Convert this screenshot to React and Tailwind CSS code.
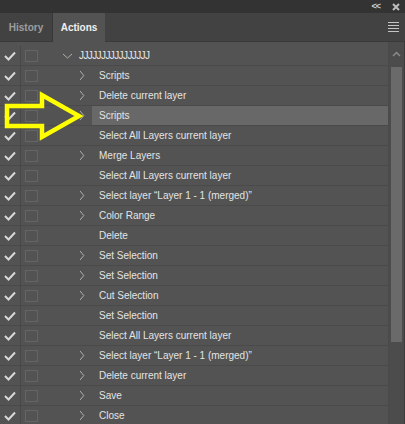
import React from "react";

const rows = [
  { level: 0, chev: "down", text: "JJJJJJJJJJJJJJJJ" },
  { level: 1, chev: "right", text: "Scripts" },
  { level: 1, chev: "right", text: "Delete current layer" },
  { level: 1, chev: "right", text: "Scripts", active: true },
  { level: 1, chev: null, text: "Select All Layers current layer" },
  { level: 1, chev: "right", text: "Merge Layers" },
  { level: 1, chev: null, text: "Select All Layers current layer" },
  { level: 1, chev: "right", text: "Select layer \u201cLayer 1 - 1 (merged)\u201d" },
  { level: 1, chev: "right", text: "Color Range" },
  { level: 1, chev: null, text: "Delete" },
  { level: 1, chev: "right", text: "Set Selection" },
  { level: 1, chev: "right", text: "Set Selection" },
  { level: 1, chev: "right", text: "Cut Selection" },
  { level: 1, chev: null, text: "Set Selection" },
  { level: 1, chev: null, text: "Select All Layers current layer" },
  { level: 1, chev: "right", text: "Select layer \u201cLayer 1 - 1 (merged)\u201d" },
  { level: 1, chev: "right", text: "Delete current layer" },
  { level: 1, chev: "right", text: "Save" },
  { level: 1, chev: "right", text: "Close" },
];

function Check() {
  return (
    <svg width="12" height="10" viewBox="0 0 12 10">
      <path d="M1 5 L4.5 8.5 L11 1.5" fill="none" stroke="#d8d8d8" strokeWidth="2" />
    </svg>
  );
}

function ChevRight() {
  return (
    <svg width="6" height="11" viewBox="0 0 6 11">
      <path d="M1 1 L4.8 5.5 L1 10" fill="none" stroke="#b0b0b0" strokeWidth="1" />
    </svg>
  );
}

function ChevDown() {
  return (
    <svg width="11" height="6" viewBox="0 0 11 6">
      <path d="M1 1 L5.5 5 L10 1" fill="none" stroke="#b0b0b0" strokeWidth="1" />
    </svg>
  );
}

function Row({ r }) {
  return (
    <div className="flex h-[20px] border-b border-[#4a4a4a]">
      <div className="w-[21px] flex items-center justify-center border-r border-[#474747]">
        <Check />
      </div>
      <div className="w-[27px] flex items-center pl-[4px]">
        <div className="w-[13px] h-[12px] border border-[#656565]" />
      </div>
      {r.level === 0 ? (
        <div className="flex items-center">
          <div className="w-[31px] flex items-center justify-end pr-[6px]">
            <ChevDown />
          </div>
          <span className="text-[#e8e8e8] text-[10px] tracking-[-0.6px]">{r.text}</span>
        </div>
      ) : (
        <div className="flex flex-1 items-stretch">
          <div className="w-[44px] flex items-center justify-end pr-[7px]">
            {r.chev === "right" && <ChevRight />}
          </div>
          <div
            className={
              "flex-1 flex items-center pl-[7px] text-[10px] text-[#e4e4e4] " +
              (r.active ? "bg-[#686868]" : "")
            }
          >
            {r.text}
          </div>
        </div>
      )}
    </div>
  );
}

export default function App() {
  return (
    <div
      className="relative w-[405px] h-[424px] overflow-hidden bg-[#535353] flex flex-col"
      style={{ fontFamily: '"Liberation Sans", Arial, sans-serif' }}
    >
      <div className="h-[13px] bg-[#333333] flex items-center justify-end gap-[12px] pr-[5px] shrink-0">
        <span className="text-[#cfcfcf] text-[9px] font-bold leading-none tracking-[-1px]">&lt;&lt;</span>
        <svg width="8" height="8" viewBox="0 0 8 8">
          <path d="M1 1 L7 7 M7 1 L1 7" stroke="#bdbdbd" strokeWidth="2" />
        </svg>
      </div>
      <div className="h-[29px] bg-[#424242] flex items-end shrink-0 border-b border-[#3a3a3a]">
        <div className="w-[53px] h-[28px] flex items-center justify-center text-[10px] font-bold text-[#9e9e9e] border-r border-[#383838]">
          History
        </div>
        <div className="w-[52px] h-[29px] -mb-px bg-[#535353] flex items-center justify-center text-[10px] font-bold text-[#f0f0f0]">
          Actions
        </div>
        <div className="flex-1 h-full flex items-center justify-end pr-[6px]">
          <div className="flex flex-col gap-[2px]">
            <div className="w-[11px] h-px bg-[#c4c4c4]" />
            <div className="w-[11px] h-px bg-[#c4c4c4]" />
            <div className="w-[11px] h-px bg-[#c4c4c4]" />
            <div className="w-[11px] h-px bg-[#c4c4c4]" />
          </div>
        </div>
      </div>
      <div className="flex flex-1 min-h-0">
        <div className="flex-1 pt-[4px] overflow-hidden">
          {rows.map((r, i) => (
            <Row key={i} r={r} />
          ))}
        </div>
        <div className="w-[17px] bg-[#4c4c4c] border-l border-[#4a4a4a] border-r border-r-[#3c3c3c] flex flex-col items-center pt-[9px]">
          <svg width="9" height="6" viewBox="0 0 9 6">
            <path d="M1 5 L4.5 1.5 L8 5" fill="none" stroke="#8a8a8a" strokeWidth="1.5" />
          </svg>
          <div className="mt-[10px] w-[11px] h-[275px] bg-[#6a6a6a]" />
        </div>
      </div>
      <svg
        className="absolute left-0 top-0 pointer-events-none"
        width="405"
        height="424"
        viewBox="0 0 405 424"
      >
        <polygon
          points="7,106 42,106 42,95 79,116 42,137 42,126 7,126"
          fill="none"
          stroke="#ffff00"
          strokeWidth="4.5"
          strokeLinejoin="miter"
        />
      </svg>
    </div>
  );
}
